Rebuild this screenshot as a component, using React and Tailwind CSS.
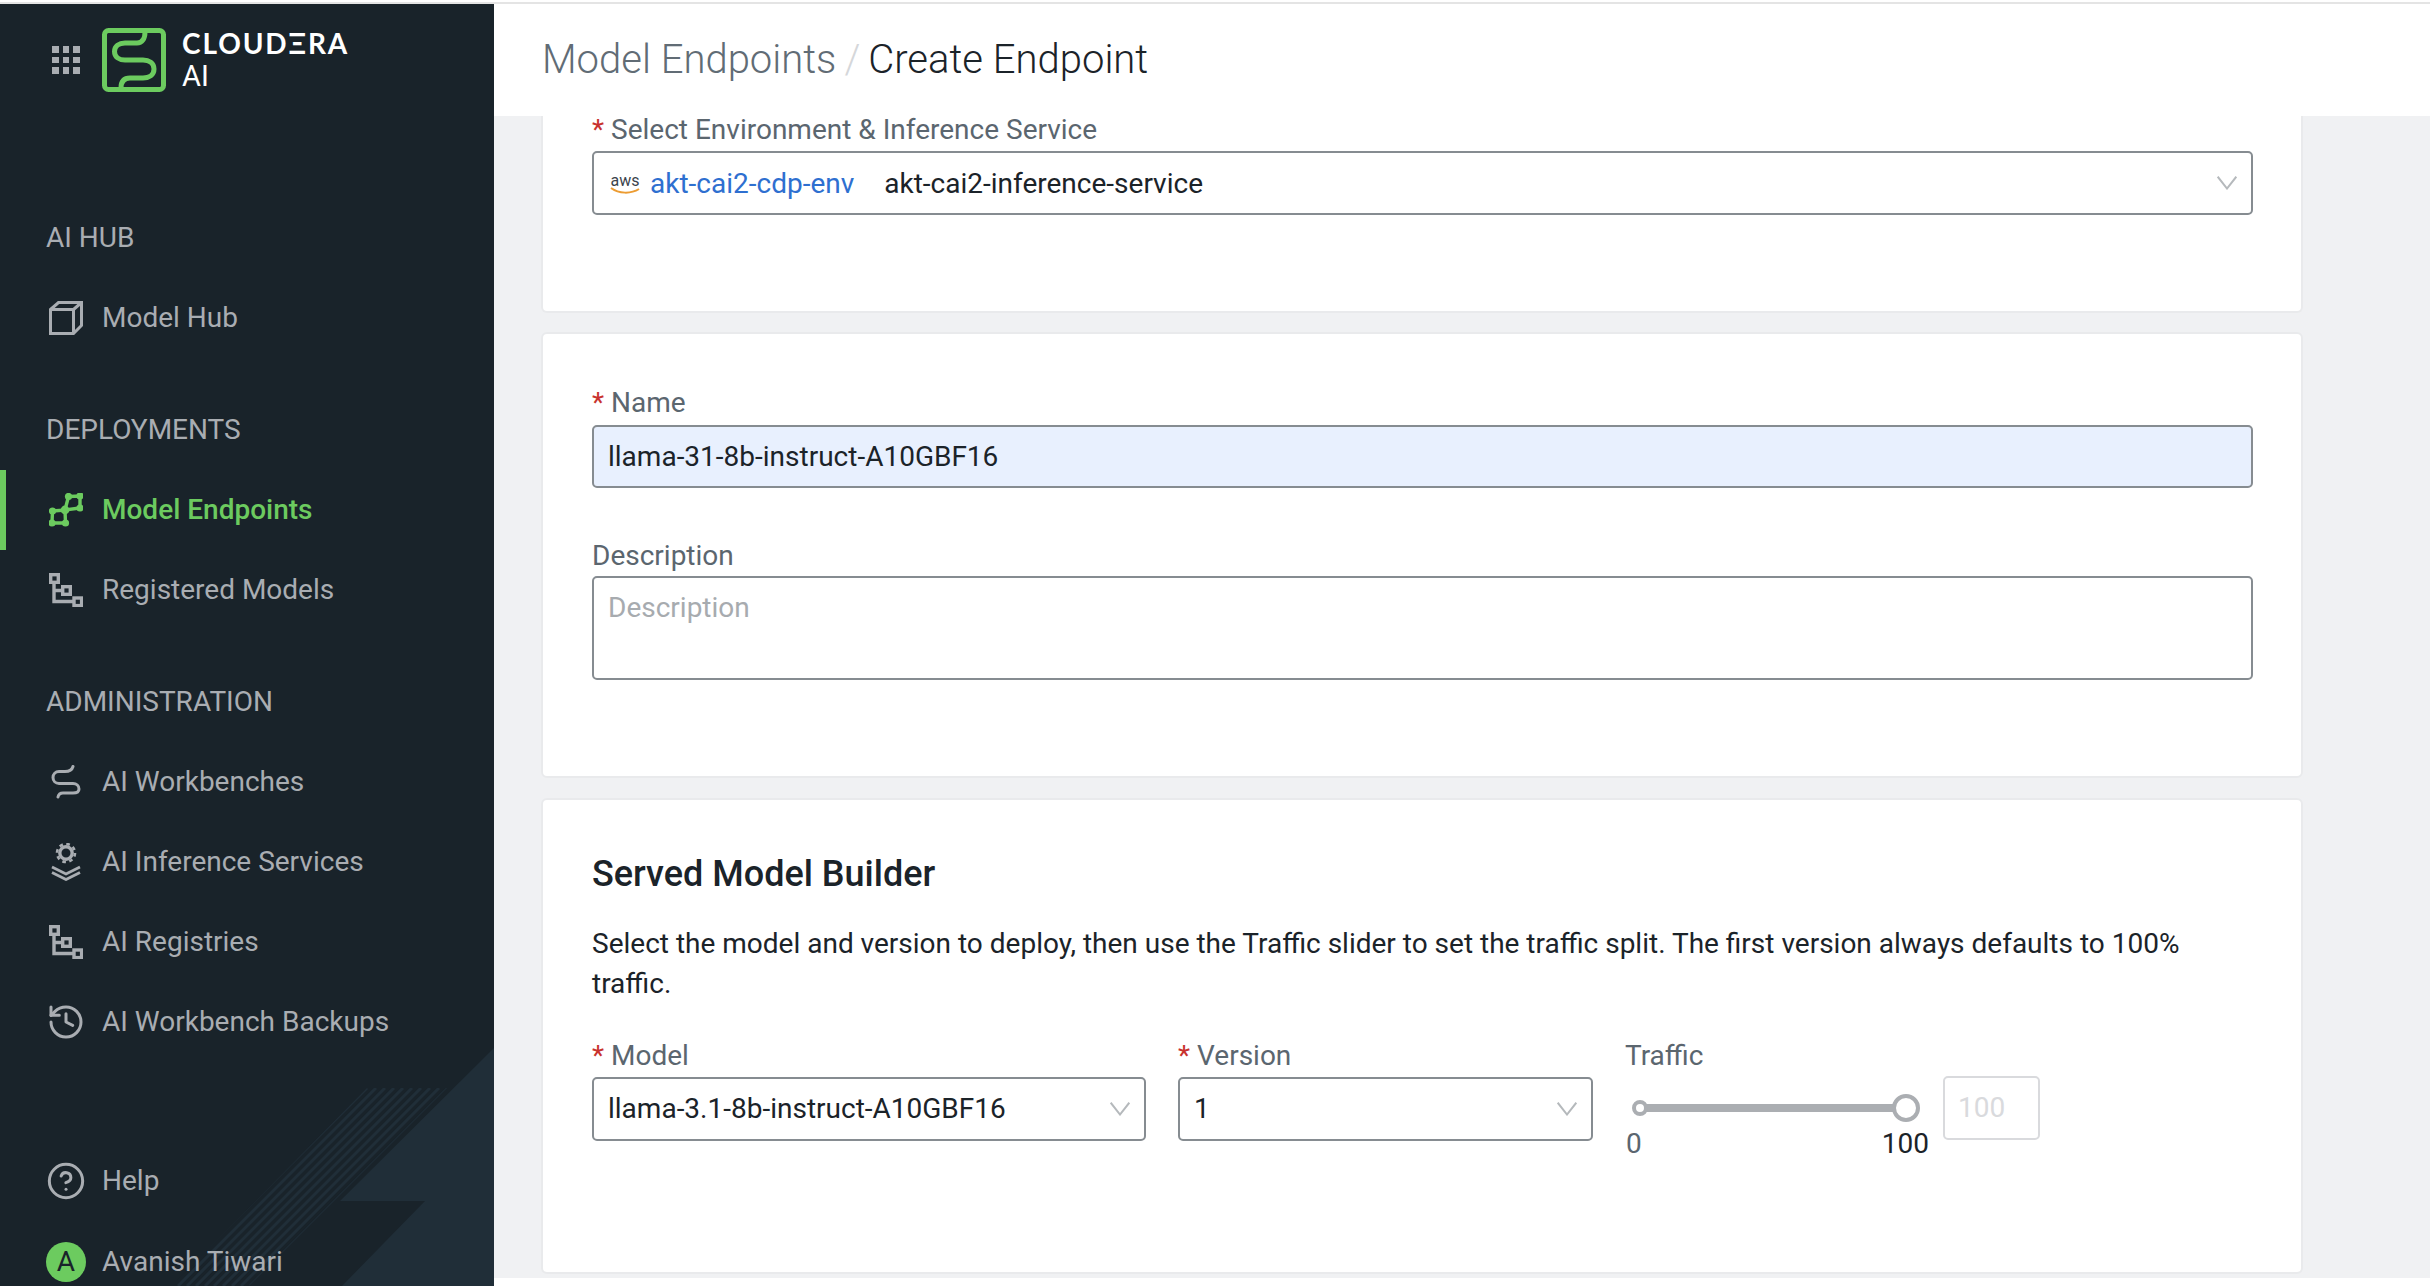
import { CircleHelp, History } from "lucide-react";

const TreeIcon = () => (
    <svg width="34" height="34" viewBox="0 0 34 34" fill="none" stroke="currentColor" strokeWidth="3.4">
        <rect x="1.7" y="1.7" width="7.6" height="7.6" />
        <rect x="13.7" y="13.7" width="7.6" height="7.6" />
        <rect x="25" y="25" width="7.6" height="7.6" />
        <path d="M5 9.5V28.5H25M5 17.5H13.5" />
    </svg>
);

const CubeIcon = () => (
    <svg width="34" height="34" viewBox="0 0 34 34" fill="none" stroke="currentColor" strokeWidth="3">
        <path d="M1.5 8.5 9.5 1.5H32.5V24.5L24.5 32.5H1.5Z" />
        <path d="M1.5 8.5H24.5V32.5M24.5 8.5 32.5 1.5" />
    </svg>
);

const EndpointIcon = () => (
    <svg width="34" height="34" viewBox="0 0 34 34" fill="none" stroke="currentColor" strokeWidth="3.4">
        <path d="M3.5 18 16 17 16.5 30 3 30ZM19.5 3.5 31 3 31 15 16 17Z" />
        <g fill="currentColor" stroke="none">
            <circle cx="3.5" cy="18" r="3.6" />
            <circle cx="16" cy="17" r="4.4" />
            <circle cx="3" cy="30" r="3.6" />
            <circle cx="16.5" cy="30" r="3.6" />
            <circle cx="19.5" cy="3.5" r="3.6" />
            <circle cx="31" cy="3" r="3.6" />
            <circle cx="31" cy="15" r="3.6" />
        </g>
    </svg>
);

const WorkbenchIcon = () => (
    <svg width="34" height="34" viewBox="0 0 34 34" fill="none" stroke="currentColor" strokeWidth="3" strokeLinecap="round">
        <path d="M24 1.5C23 5 20 6.5 16 6.5H10C6.5 6.5 4 9 4 12.5S6.5 18.5 10 18.5H24C27.5 18.5 30 21 30 24S27.5 28 24 28H14C11 28 9.5 29.5 9 32" />
    </svg>
);

const InferenceIcon = () => (
    <svg width="34" height="38" viewBox="0 0 34 38" fill="none" stroke="currentColor">
        <circle cx="17" cy="10" r="6.2" strokeWidth="3.4" />
        <circle cx="17" cy="10" r="9" strokeWidth="2.6" strokeDasharray="3.6 3.47" />
        <path d="M3 24 17 31 31 24M3 29.5 17 36.5 31 29.5" strokeWidth="2.8" />
    </svg>
);

const GridIcon = () => (
    <div className="grid grid-cols-3 gap-[4px] w-[28px]">
        {[1, 2, 3, 4, 5, 6, 7, 8, 9].map((n) => (
            <span key={n} className="w-[6.5px] h-[6.5px] bg-[#a9adb2]" />
        ))}
    </div>
);

const Logo = () => (
    <svg width="64" height="64" viewBox="0 0 64 64" fill="none" stroke="#6ccb5f" strokeWidth="5">
        <rect x="2.5" y="2.5" width="59" height="59" rx="4" />
        <path d="M43 4C43 11 40 15 35 15H23C17 15 12.5 18 12.5 23.5S17 32 23 32H41C47 32 52 35 52 41S47 50 41 50H28C22 50 19 53 19 60" />
    </svg>
);

const Chevron = () => (
    <svg width="20" height="14" viewBox="0 0 20 14" fill="none" stroke="#b5b9bc" strokeWidth="2">
        <path d="M0.7 0.7 10 12.5 19.3 0.7" />
    </svg>
);

const NavItem = ({ icon, label, active }) => (
    <div className={`relative h-[80px] pl-[49px] flex items-center gap-[19px] ${active ? "text-[#6ccb5f] font-medium" : "text-[#a9adb2]"}`}>
        {active && <span className="absolute left-0 top-0 w-[6px] h-[80px] bg-[#6ccb5f]" />}
        <span className="w-[34px] flex justify-center shrink-0">{icon}</span>
        <span>{label}</span>
    </div>
);

const SectionTitle = ({ children }) => (
    <div className="h-[80px] pl-[46px] flex items-center text-[#a9adb2]">{children}</div>
);

const FieldLabel = ({ children, required }) => (
    <div className="h-[26px] leading-[26px] text-[#5b666f] whitespace-nowrap">
        {required && <span className="text-[#c8322e] mr-[7px]">*</span>}
        {children}
    </div>
);

const SelectBox = ({ children, className }) => (
    <div className={`h-[64px] border-2 border-[#868c91] rounded-[5px] bg-white pl-[14px] pr-[14px] flex items-center justify-between text-[#1b2329] ${className}`}>
        <div className="flex items-center whitespace-nowrap">{children}</div>
        <Chevron />
    </div>
);

const SidebarArt = () => (
    <svg className="absolute left-0 bottom-0" width="494" height="238" viewBox="0 0 494 238" fill="none">
        <defs>
            <clipPath id="stripes">
                <path d="M367 40H447L249 238H172Z" />
            </clipPath>
        </defs>
        <path d="M494 0V238H342L425 153H340Z" fill="#202e38" />
        <g clipPath="url(#stripes)" stroke="#202e38" strokeWidth="3">
            {[0, 1, 2, 3, 4, 5, 6, 7, 8, 9, 10, 11, 12].map((i) => (
                <path key={i} d={`M${367 + i * 9} 40 ${169 + i * 9} 238`} />
            ))}
        </g>
    </svg>
);

const App = () => {
    return (
        <div className="w-full h-screen overflow-hidden flex flex-col bg-white [font-family:Roboto,sans-serif] text-[28px]">
            <div className="h-[2px] bg-white shrink-0" />
            <div className="h-[2px] bg-[#e4e4e4] shrink-0" />
            <div className="flex-1 flex min-h-0">
                <aside className="relative w-[494px] shrink-0 bg-[#19232a] overflow-hidden">
                    <SidebarArt />
                    <div className="relative">
                        <div className="h-[112px] pl-[52px] flex items-center">
                            <GridIcon />
                            <div className="ml-[22px]"><Logo /></div>
                            <div className="ml-[16px] text-white leading-none">
                                <div className="[font-family:Lato,sans-serif] font-bold text-[28px] tracking-[1.9px] leading-[30px]">CLOUDΞRA</div>
                                <div className="text-[29px] leading-[34px] mt-[1px]">AI</div>
                            </div>
                        </div>
                        <div className="mt-[82px]">
                            <SectionTitle>AI HUB</SectionTitle>
                            <NavItem icon={<CubeIcon />} label="Model Hub" />
                        </div>
                        <div className="mt-[32px]">
                            <SectionTitle>DEPLOYMENTS</SectionTitle>
                            <NavItem icon={<EndpointIcon />} label="Model Endpoints" active />
                            <NavItem icon={<TreeIcon />} label="Registered Models" />
                        </div>
                        <div className="mt-[32px]">
                            <SectionTitle>ADMINISTRATION</SectionTitle>
                            <NavItem icon={<WorkbenchIcon />} label="AI Workbenches" />
                            <NavItem icon={<InferenceIcon />} label="AI Inference Services" />
                            <NavItem icon={<TreeIcon />} label="AI Registries" />
                            <NavItem icon={<History size={40} strokeWidth={1.8} className="shrink-0" />} label="AI Workbench Backups" />
                        </div>
                        <div className="mt-[79px]">
                            <NavItem icon={<CircleHelp size={40} strokeWidth={1.8} className="shrink-0" />} label="Help" />
                            <div className="h-[1px]" />
                            <NavItem
                                icon={
                                    <span className="w-[40px] h-[40px] rounded-full bg-[#6ccb5f] text-[#19232a] flex items-center justify-center shrink-0">
                                        A
                                    </span>
                                }
                                label="Avanish Tiwari"
                            />
                        </div>
                    </div>
                </aside>

                <main className="flex-1 min-w-0 flex flex-col">
                    <header className="h-[112px] shrink-0 pl-[49px] flex items-center text-[40px] font-light whitespace-nowrap">
                        <span className="text-[#616c75] -ml-[1px]">Model Endpoints</span>
                        <span className="text-[#d5d7da] mx-[8px]">/</span>
                        <span className="text-[#1b2329]">Create Endpoint</span>
                    </header>
                    <div className="h-[1162px] shrink-0 bg-[#f0f1f3] pl-[47px]">
                        <section className="w-[1762px] h-[197px] bg-white border-2 border-t-0 border-[#e9eaec] rounded-b-[6px] pl-[49px] pr-[48px] pt-[1px]">
                            <FieldLabel required>Select Environment &amp; Inference Service</FieldLabel>
                            <SelectBox className="mt-[8px]">
                                <div className="w-[34px] flex flex-col items-center mt-[2px]">
                                    <span className="text-[16px] leading-[13px] text-[#3b444c]">aws</span>
                                    <svg width="30" height="8" viewBox="0 0 30 8" fill="none" stroke="#ec9c32" strokeWidth="2">
                                        <path d="M1 1C9 7 21 7 29 2" />
                                    </svg>
                                </div>
                                <span className="text-[#2e6fd0] ml-[8px] mt-[2px]">akt-cai2-cdp-env</span>
                                <span className="ml-[30px] mt-[2px]">akt-cai2-inference-service</span>
                            </SelectBox>
                        </section>

                        <section className="mt-[19px] w-[1762px] h-[446px] bg-white border-2 border-[#e9eaec] rounded-[6px] pl-[49px] pr-[48px] pt-[56px]">
                            <FieldLabel required>Name</FieldLabel>
                            <div className="mt-[9px] h-[63px] border-2 border-[#868c91] rounded-[5px] bg-[#e8f0fe] pl-[14px] flex items-center text-[#1b2329]">
                                llama-31-8b-instruct-A10GBF16
                            </div>
                            <div className="mt-[55px]">
                                <FieldLabel>Description</FieldLabel>
                            </div>
                            <div className="mt-[7px] h-[104px] border-2 border-[#868c91] rounded-[5px] pl-[14px] pt-[9px] text-[#a7abaf]">
                                Description
                            </div>
                        </section>

                        <section className="mt-[20px] w-[1762px] h-[476px] bg-white border-2 border-[#e9eaec] rounded-[6px] pl-[49px] pr-[48px] pt-[54px]">
                            <h2 className="text-[36px] leading-[40px] font-medium text-[#1b2329]">Served Model Builder</h2>
                            <p className="mt-[30px] w-[1660px] leading-[40px] text-[#1b2329]">
                                Select the model and version to deploy, then use the Traffic slider to set the traffic split. The first version always defaults to 100% traffic.
                            </p>
                            <div className="mt-[39px] flex">
                                <div className="w-[554px]">
                                    <FieldLabel required>Model</FieldLabel>
                                    <SelectBox className="mt-[8px]">llama-3.1-8b-instruct-A10GBF16</SelectBox>
                                </div>
                                <div className="ml-[32px] w-[415px]">
                                    <FieldLabel required>Version</FieldLabel>
                                    <SelectBox className="mt-[8px]">1</SelectBox>
                                </div>
                                <div className="ml-[32px]">
                                    <FieldLabel>Traffic</FieldLabel>
                                    <div className="mt-[7px] flex items-start">
                                        <div className="w-[318px]">
                                            <div className="h-[52px] pt-[28px]">
                                                <div className="relative ml-[15px] w-[266px] h-[8px] bg-[#abaeb2]">
                                                    <span className="absolute -left-[8px] -top-[4px] w-[16px] h-[16px] rounded-full bg-white border-[4px] border-[#abaeb2]" />
                                                    <span className="absolute -right-[14px] -top-[10px] w-[28px] h-[28px] rounded-full bg-white border-[4px] border-[#abaeb2]" />
                                                </div>
                                            </div>
                                            <div className="w-[304px] pl-[1px] flex justify-between leading-[32px]">
                                                <span className="text-[#5b666f]">0</span>
                                                <span className="text-[#1b2329]">100</span>
                                            </div>
                                        </div>
                                        <div className="w-[97px] h-[64px] border-2 border-[#d9dadd] rounded-[5px] pl-[13px] flex items-center text-[#d9dadd]">100</div>
                                    </div>
                                </div>
                            </div>
                        </section>
                    </div>
                </main>
            </div>
        </div>
    );
};

export default App;
